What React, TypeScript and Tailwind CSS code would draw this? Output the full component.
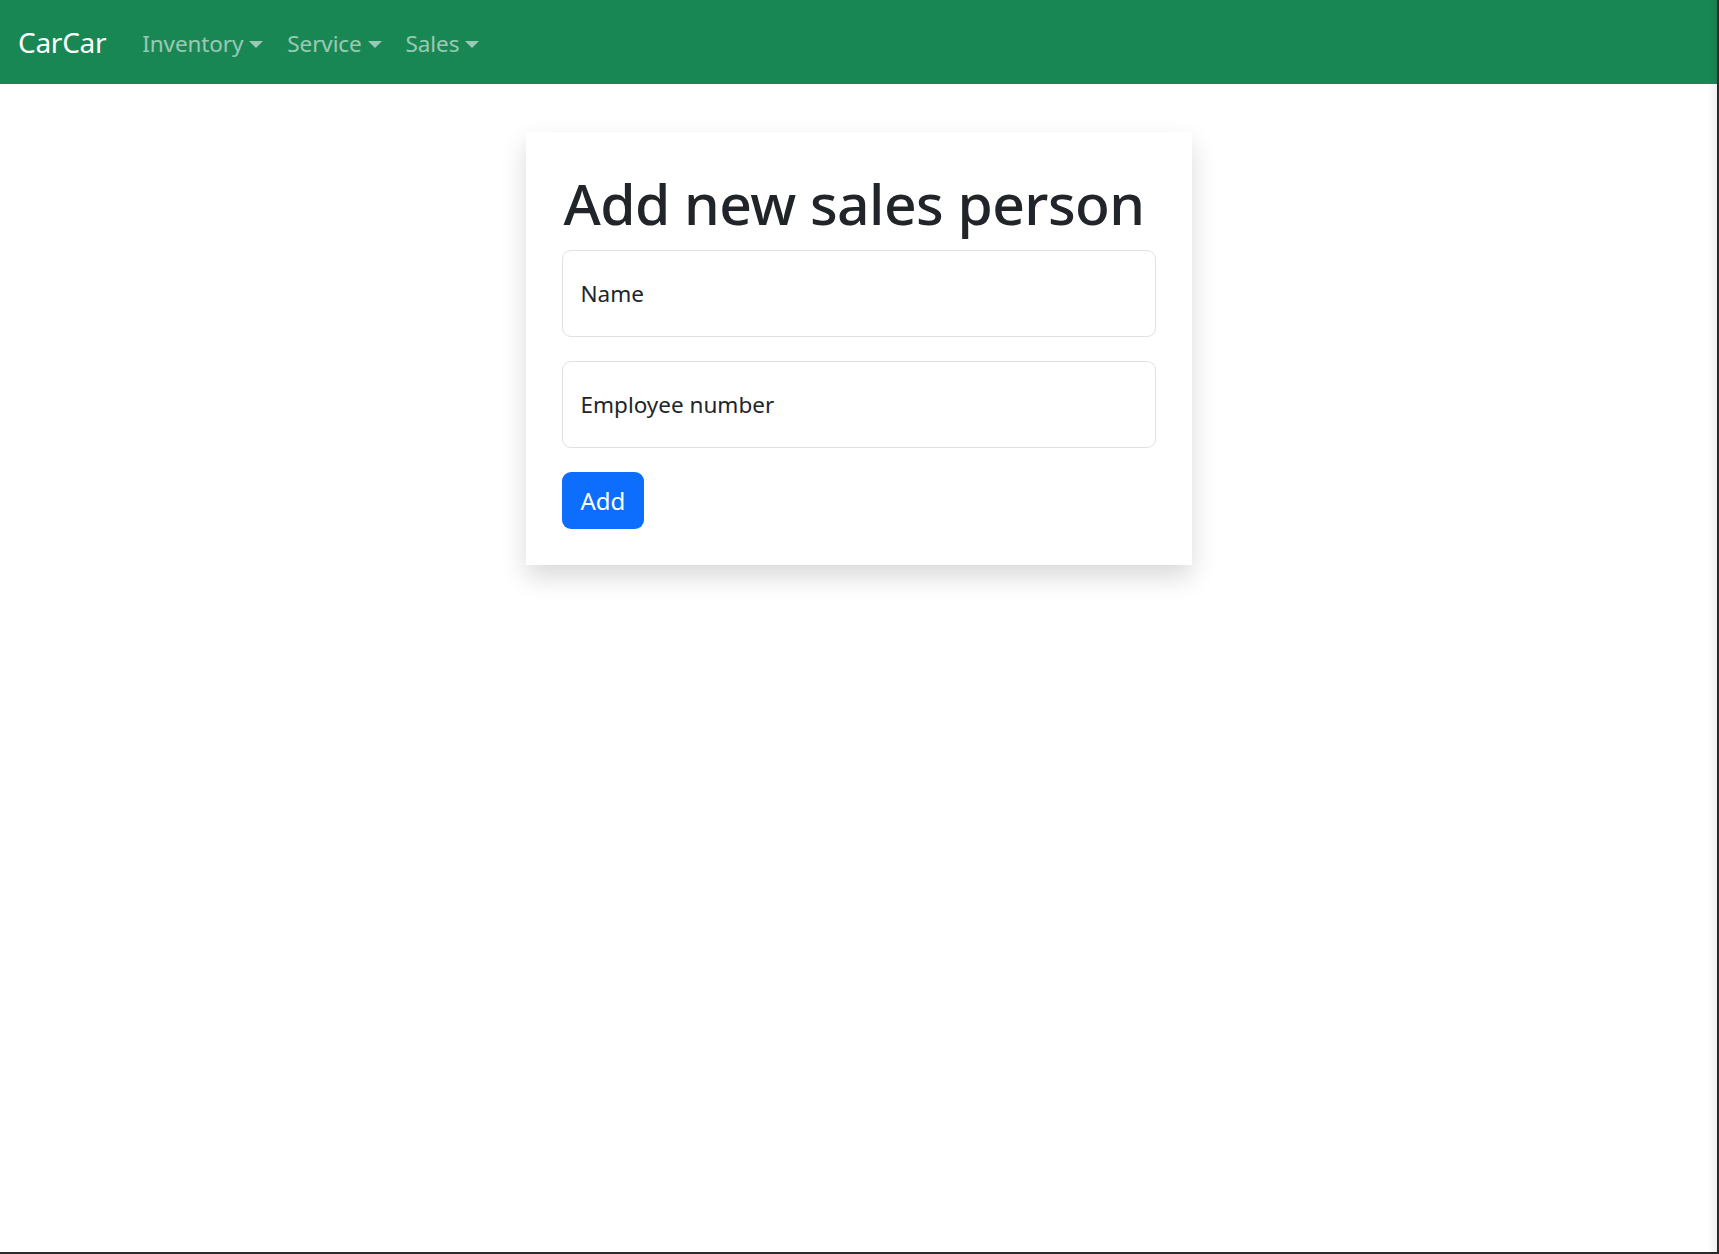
import React from "react";

const navItems = ["Inventory", "Service", "Sales"];

function NavDropdown({ label }: { label: string }) {
  return (
    <li>
      <a href="#" className="mt-[3px] flex items-center px-[12px] text-[22.5px] leading-[36px] tracking-[-0.005em] text-white/55">
        {label}
        <span className="ml-[6px] mt-[2px] h-0 w-0 border-x-[7px] border-t-[7px] border-x-transparent border-t-white/55" />
      </a>
    </li>
  );
}

export default function App() {
  return (
    <div className="relative h-[1254px] w-full overflow-hidden bg-white font-['Noto_Sans','Open_Sans',sans-serif] text-[#212529]">
      <div className="h-[1252px] w-[1717px] border-r-2 border-b-2 border-[#2b2b2b] box-content">
        {/* Navbar */}
        <nav className="flex h-[84px] items-center bg-[#198754] px-[18px]">
          <a href="#" className="mr-[24px] text-[28px] leading-[45px] tracking-[-0.01em] text-white">
            CarCar
          </a>
          <ul className="flex items-center">
            {navItems.map((item) => (
              <NavDropdown key={item} label={item} />
            ))}
          </ul>
        </nav>

        {/* Form card */}
        <main className="flex justify-center pt-[48px]">
          <div className="w-[666px] bg-white p-[36px] shadow-[0_12px_24px_rgba(0,0,0,0.15)]">
            <h1 className="mb-[12px] whitespace-nowrap pl-[2px] text-[57px] font-medium leading-[70px] tracking-[-0.01em]">
              Add new sales person
            </h1>
            <form onSubmit={(e) => e.preventDefault()}>
              <div className="mb-[24px]">
                <input
                  type="text"
                  placeholder="Name"
                  className="h-[87px] w-full rounded-[9px] border-[1.5px] border-[#dee2e6] px-[18px] text-[22.5px] text-[#212529] outline-none placeholder:text-[#212529]"
                />
              </div>
              <div className="mb-[24px]">
                <input
                  type="text"
                  placeholder="Employee number"
                  className="h-[87px] w-full rounded-[9px] border-[1.5px] border-[#dee2e6] px-[18px] text-[22.5px] text-[#212529] outline-none placeholder:text-[#212529]"
                />
              </div>
              <button
                type="submit"
                className="h-[57px] rounded-[9px] bg-[#0d6efd] px-[19px] text-[24px] text-white"
              >
                Add
              </button>
            </form>
          </div>
        </main>
      </div>
      {/* window edge shade */}
      <div className="pointer-events-none absolute right-[2px] top-0 h-full w-[10px] bg-gradient-to-r from-transparent to-black/[0.06]" />
    </div>
  );
}
